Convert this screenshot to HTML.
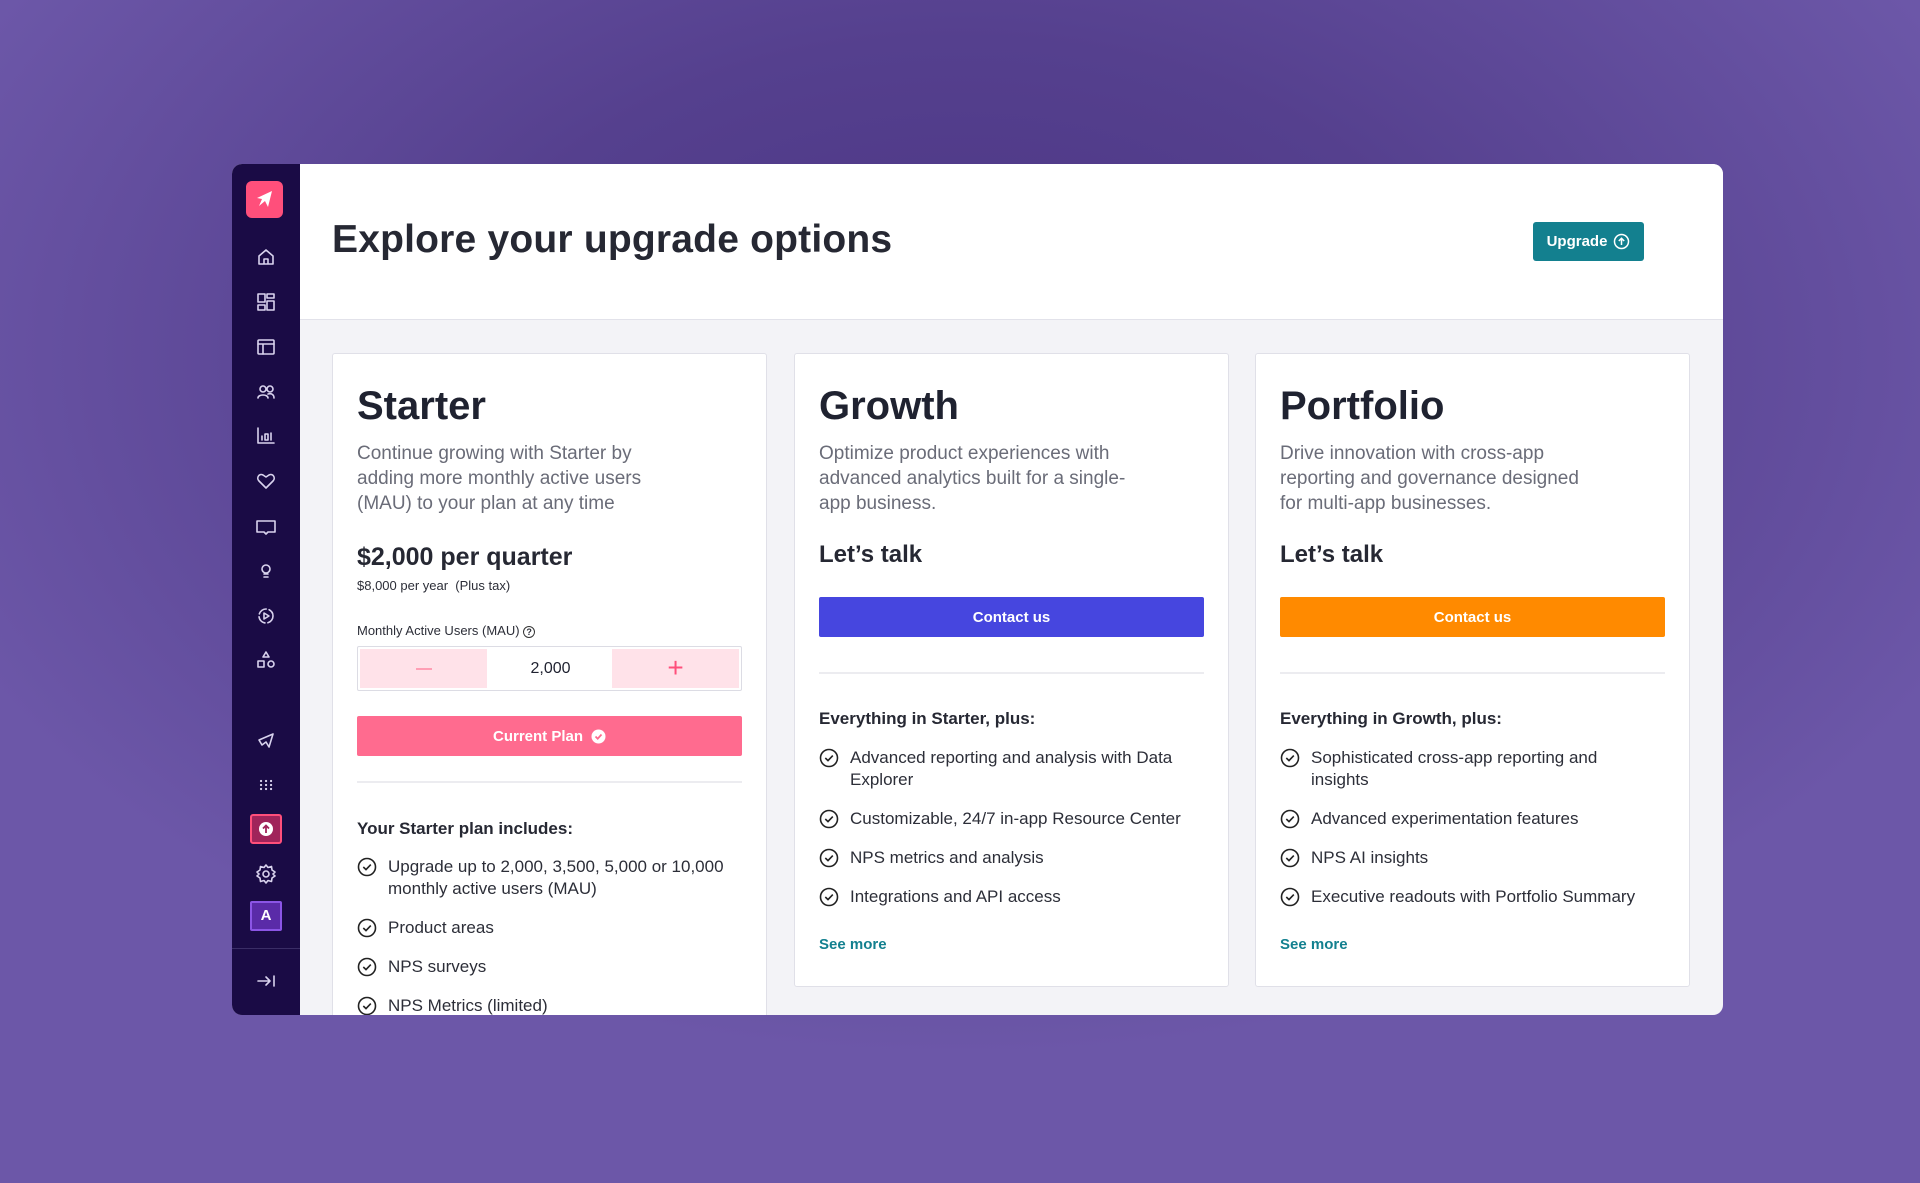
<!DOCTYPE html>
<html><head><meta charset="utf-8"><style>
*{box-sizing:border-box;margin:0;padding:0}
body{width:1920px;height:1183px;overflow:hidden;font-family:"Liberation Sans",sans-serif;color:#1f2230;
background:radial-gradient(ellipse 1100px 700px at 50% 30%,#4b3584 0%,#55408e 45%,#6c57a8 100%);position:relative}
.win{position:absolute;left:232px;top:164px;width:1491px;height:851px;border-radius:10px;overflow:hidden;background:#f3f3f7}
.side{position:absolute;left:0;top:0;width:68px;height:851px;background:#1a0b45}
.ic{position:absolute;left:22px;width:24px;height:24px}
.ic svg{width:24px;height:24px;fill:none;stroke:#d9d3ee;stroke-width:1.6;stroke-linecap:round;stroke-linejoin:round}
.head{position:absolute;left:68px;top:0;right:0;height:156px;background:#fff;border-bottom:1px solid #e2e2ea}
.head h1{position:absolute;left:32px;top:54px;font-size:39px;font-weight:700;color:#262833;letter-spacing:0.2px}
.upg{position:absolute;left:1233px;top:58px;width:111px;height:39px;background:#13808f;border-radius:3px;color:#fff;font-weight:700;font-size:15px;display:flex;align-items:center;justify-content:center;gap:6px}
.card{position:absolute;top:189px;width:435px;height:634px;background:#fff;border:1px solid #e0e0e8;border-radius:3px}
.card .in{position:absolute;left:24px;right:24px;top:0}
.t{position:absolute;top:30px;font-size:40px;font-weight:700;color:#1f2230}
.d{position:absolute;top:87px;font-size:19px;line-height:25px;color:#6a6c78;width:320px}
.lt{position:absolute;top:187px;font-size:24px;font-weight:700;color:#262833}
.btn{position:absolute;left:0;right:0;height:40px;border-radius:2px;color:#fff;font-weight:700;font-size:15px;display:flex;align-items:center;justify-content:center;gap:8px}
.hr{position:absolute;left:0;right:0;height:2px;background:#ececf0}
.sh{position:absolute;font-size:17px;font-weight:700;color:#262833}
.li{position:absolute;left:0;padding-left:31px;font-size:17px;line-height:22px;color:#2c2e38;width:372px}
.li svg{position:absolute;left:0;top:1px;width:20px;height:20px}
.sm{position:absolute;font-size:15px;font-weight:700;color:#13808f}
</style></head><body>
<div class="win">
 <div class="side">
  <div style="position:absolute;left:14px;top:17px;width:37px;height:37px;background:#ff4f7b;border-radius:6px"><svg width="37" height="37" viewBox="0 0 37 37"><path d="M11 17 L26 10 L22 26 L19 20 L13 25 L16 18 Z" fill="#fff"/></svg></div>
  <div class="ic" style="top:81px"><svg viewBox="0 0 24 24"><path d="M5 11 L12 5 L19 11 V19 H5 Z M10 19 V14 H14 V19"/></svg></div>
  <div class="ic" style="top:126px"><svg viewBox="0 0 24 24"><rect x="4" y="4" width="7" height="8"/><rect x="13" y="4" width="7" height="4"/><rect x="4" y="15" width="7" height="5"/><rect x="13" y="11" width="7" height="9"/></svg></div>
  <div class="ic" style="top:171px"><svg viewBox="0 0 24 24"><rect x="4" y="5" width="16" height="14" rx="1"/><path d="M4 9 H20 M9 9 V19"/></svg></div>
  <div class="ic" style="top:216px"><svg viewBox="0 0 24 24"><circle cx="9" cy="9" r="3"/><circle cx="16" cy="9" r="3"/><path d="M4 18 C4 14 14 14 14 18 M14 14 C18 13 20 15 20 18"/></svg></div>
  <div class="ic" style="top:260px"><svg viewBox="0 0 24 24"><path d="M4 4 V19 H20 M8 16 V12 M11 16 V10 H14 V16 Z M17 16 V9"/></svg></div>
  <div class="ic" style="top:305px"><svg viewBox="0 0 24 24"><path d="M12 19 L5 12 C2 9 5 4 9 6 L12 8 L15 6 C19 4 22 9 19 12 Z"/></svg></div>
  <div class="ic" style="top:351px"><svg viewBox="0 0 24 24"><path d="M3 6 H21 V17 H14 L12 19 L10 17 H3 Z"/></svg></div>
  <div class="ic" style="top:395px"><svg viewBox="0 0 24 24"><circle cx="12" cy="10" r="4"/><path d="M10 15 H14 M10 18 H14"/></svg></div>
  <div class="ic" style="top:440px"><svg viewBox="0 0 24 24"><circle cx="12" cy="12" r="7" stroke-dasharray="9 3"/><path d="M10 9 L15 12 L10 15 Z"/></svg></div>
  <div class="ic" style="top:484px"><svg viewBox="0 0 24 24"><path d="M12 4 L15 9 H9 Z"/><rect x="4" y="13" width="6" height="6"/><circle cx="17" cy="16" r="3"/></svg></div>
  <div class="ic" style="top:564px"><svg viewBox="0 0 24 24"><path d="M5 12 L19 6 L15 19 L12 14 L8 17 Z"/></svg></div>
  <div class="ic" style="top:609px"><svg viewBox="0 0 24 24" style="stroke-width:2.2"><path d="M7 8h.1M12 8h.1M17 8h.1M7 12h.1M12 12h.1M17 12h.1M7 16h.1M12 16h.1M17 16h.1"/></svg></div>
  <div style="position:absolute;left:18px;top:650px;width:32px;height:30px;background:#a0245a;border:2px solid #ff4f7b;border-radius:3px"><svg width="28" height="26" viewBox="0 0 28 26"><circle cx="14" cy="13" r="7" fill="#fff"/><path d="M14 17 V10 M11 12.5 L14 9.5 L17 12.5" stroke="#a0245a" stroke-width="1.8" fill="none"/></svg></div>
  <div class="ic" style="top:698px"><svg viewBox="0 0 24 24"><circle cx="12" cy="12" r="3"/><path d="M12 3 L14 5.5 L17.5 4.5 L18 8 L21 10 L19 12 L21 14 L18 16 L17.5 19.5 L14 18.5 L12 21 L10 18.5 L6.5 19.5 L6 16 L3 14 L5 12 L3 10 L6 8 L6.5 4.5 L10 5.5 Z"/></svg></div>
  <div style="position:absolute;left:18px;top:737px;width:32px;height:30px;background:#5a2ba8;border:2px solid #8b55e6;border-radius:2px;color:#fff;font-weight:700;font-size:15px;text-align:center;line-height:26px">A</div>
  <div style="position:absolute;left:0;right:0;top:784px;height:1px;background:#3a2d66"></div>
  <div class="ic" style="top:805px"><svg viewBox="0 0 24 24"><path d="M4 12 H16 M12 8 L16 12 L12 16 M20 7 V17"/></svg></div>
 </div>
 <div class="head"><h1>Explore your upgrade options</h1>
  <div class="upg">Upgrade <svg width="17" height="17" viewBox="0 0 17 17"><circle cx="8.5" cy="8.5" r="7" stroke="#fff" stroke-width="1.5" fill="none"/><path d="M8.5 12 V5.5 M5.8 8 L8.5 5.3 L11.2 8" stroke="#fff" stroke-width="1.5" fill="none"/></svg></div>
 </div>

 <div class="card" style="left:100px;height:700px">
  <div class="in">
   <div class="t">Starter</div>
   <div class="d">Continue growing with Starter by adding more monthly active users (MAU) to your plan at any time</div>
   <div style="position:absolute;top:540px;display:none"></div>
   <div style="position:absolute;top:189px;font-size:25px;font-weight:700;color:#262833">$2,000 per quarter</div>
   <div style="position:absolute;top:224px;font-size:13px;color:#2c2e38">$8,000 per year&nbsp; (Plus tax)</div>
   <div style="position:absolute;top:269px;font-size:13px;color:#2c2e38">Monthly Active Users (MAU) <span style="display:inline-block;width:12px;height:12px;border:1.3px solid #333;border-radius:50%;font-size:9px;line-height:10px;text-align:center;font-weight:700">?</span></div>
   <div style="position:absolute;top:292px;left:0;right:0;height:45px;border:1px solid #dcdce4;border-radius:2px;background:#fff">
    <div style="position:absolute;left:2px;top:2px;width:127px;height:39px;background:#ffe2e9"><div style="position:absolute;left:56px;top:19px;width:16px;height:2px;background:#ff9fb5"></div></div>
    <div style="position:absolute;left:129px;width:127px;top:0;height:43px;text-align:center;line-height:43px;font-size:16px">2,000</div>
    <div style="position:absolute;right:2px;top:2px;width:127px;height:39px;background:#ffe2e9;color:#ff4f7b;font-size:28px;text-align:center;line-height:38px;font-weight:300">+</div>
   </div>
   <div class="btn" style="top:362px;background:#ff6b8f">Current Plan <svg width="15" height="15" viewBox="0 0 15 15"><circle cx="7.5" cy="7.5" r="7" fill="#fff"/><path d="M4.5 7.5 L6.7 9.7 L10.5 5.5" stroke="#ff6b8f" stroke-width="1.8" fill="none"/></svg></div>
   <div class="hr" style="top:427px"></div>
   <div class="sh" style="top:465px">Your Starter plan includes:</div>
   <div class="li" style="top:502px;width:390px"><svg viewBox="0 0 20 20"><circle cx="10" cy="10" r="8.5" fill="none" stroke="#222" stroke-width="1.6"/><path d="M6.3 10 L9 12.6 L13.8 7.6" fill="none" stroke="#222" stroke-width="1.6"/></svg>Upgrade up to 2,000, 3,500, 5,000 or 10,000 monthly active users (MAU)</div>
   <div class="li" style="top:563px"><svg viewBox="0 0 20 20"><circle cx="10" cy="10" r="8.5" fill="none" stroke="#222" stroke-width="1.6"/><path d="M6.3 10 L9 12.6 L13.8 7.6" fill="none" stroke="#222" stroke-width="1.6"/></svg>Product areas</div>
   <div class="li" style="top:602px"><svg viewBox="0 0 20 20"><circle cx="10" cy="10" r="8.5" fill="none" stroke="#222" stroke-width="1.6"/><path d="M6.3 10 L9 12.6 L13.8 7.6" fill="none" stroke="#222" stroke-width="1.6"/></svg>NPS surveys</div>
   <div class="li" style="top:641px"><svg viewBox="0 0 20 20"><circle cx="10" cy="10" r="8.5" fill="none" stroke="#222" stroke-width="1.6"/><path d="M6.3 10 L9 12.6 L13.8 7.6" fill="none" stroke="#222" stroke-width="1.6"/></svg>NPS Metrics (limited)</div>
  </div>
 </div>

 <div class="card" style="left:562px">
  <div class="in">
   <div class="t">Growth</div>
   <div class="d">Optimize product experiences with advanced analytics built for a single-app business.</div>
   <div class="lt">Let’s talk</div>
   <div class="btn" style="top:243px;background:#4646df">Contact us</div>
   <div class="hr" style="top:318px"></div>
   <div class="sh" style="top:355px">Everything in Starter, plus:</div>
   <div class="li" style="top:393px"><svg viewBox="0 0 20 20"><circle cx="10" cy="10" r="8.5" fill="none" stroke="#222" stroke-width="1.6"/><path d="M6.3 10 L9 12.6 L13.8 7.6" fill="none" stroke="#222" stroke-width="1.6"/></svg>Advanced reporting and analysis with Data Explorer</div>
   <div class="li" style="top:454px"><svg viewBox="0 0 20 20"><circle cx="10" cy="10" r="8.5" fill="none" stroke="#222" stroke-width="1.6"/><path d="M6.3 10 L9 12.6 L13.8 7.6" fill="none" stroke="#222" stroke-width="1.6"/></svg>Customizable, 24/7 in-app Resource Center</div>
   <div class="li" style="top:493px"><svg viewBox="0 0 20 20"><circle cx="10" cy="10" r="8.5" fill="none" stroke="#222" stroke-width="1.6"/><path d="M6.3 10 L9 12.6 L13.8 7.6" fill="none" stroke="#222" stroke-width="1.6"/></svg>NPS metrics and analysis</div>
   <div class="li" style="top:532px"><svg viewBox="0 0 20 20"><circle cx="10" cy="10" r="8.5" fill="none" stroke="#222" stroke-width="1.6"/><path d="M6.3 10 L9 12.6 L13.8 7.6" fill="none" stroke="#222" stroke-width="1.6"/></svg>Integrations and API access</div>
   <div class="sm" style="top:582px">See more</div>
  </div>
 </div>

 <div class="card" style="left:1023px">
  <div class="in">
   <div class="t">Portfolio</div>
   <div class="d">Drive innovation with cross-app reporting and governance designed for multi-app businesses.</div>
   <div class="lt">Let’s talk</div>
   <div class="btn" style="top:243px;background:#ff8a00">Contact us</div>
   <div class="hr" style="top:318px"></div>
   <div class="sh" style="top:355px">Everything in Growth, plus:</div>
   <div class="li" style="top:393px;width:360px"><svg viewBox="0 0 20 20"><circle cx="10" cy="10" r="8.5" fill="none" stroke="#222" stroke-width="1.6"/><path d="M6.3 10 L9 12.6 L13.8 7.6" fill="none" stroke="#222" stroke-width="1.6"/></svg>Sophisticated cross-app reporting and insights</div>
   <div class="li" style="top:454px"><svg viewBox="0 0 20 20"><circle cx="10" cy="10" r="8.5" fill="none" stroke="#222" stroke-width="1.6"/><path d="M6.3 10 L9 12.6 L13.8 7.6" fill="none" stroke="#222" stroke-width="1.6"/></svg>Advanced experimentation features</div>
   <div class="li" style="top:493px"><svg viewBox="0 0 20 20"><circle cx="10" cy="10" r="8.5" fill="none" stroke="#222" stroke-width="1.6"/><path d="M6.3 10 L9 12.6 L13.8 7.6" fill="none" stroke="#222" stroke-width="1.6"/></svg>NPS AI insights</div>
   <div class="li" style="top:532px"><svg viewBox="0 0 20 20"><circle cx="10" cy="10" r="8.5" fill="none" stroke="#222" stroke-width="1.6"/><path d="M6.3 10 L9 12.6 L13.8 7.6" fill="none" stroke="#222" stroke-width="1.6"/></svg>Executive readouts with Portfolio Summary</div>
   <div class="sm" style="top:582px">See more</div>
  </div>
 </div>
</div>
</body></html>
